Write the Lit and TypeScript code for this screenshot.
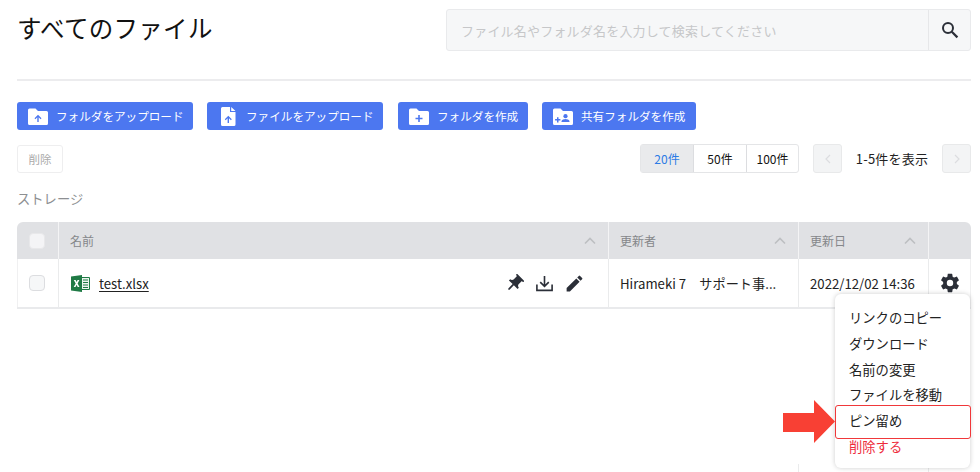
import { LitElement, html, css, svg } from "lit";
import { customElement } from "lit/decorators.js";

const folder = (inner: unknown) => html`<svg class="ic" width="20" height="17" viewBox="0 0 20 17"><path fill="#fff" d="M0 2a1.5 1.5 0 0 1 1.5-1.5h6L10 3h8.5A1.5 1.5 0 0 1 20 4.500v11a1.5 1.5 0 0 1-1.5 1.500h-17A1.5 1.5 0 0 1 0 15.500z"/>${inner}</svg>`;
const upArrow = svg`<path fill="#4c77f0" d="M10 6.800l3.500 3.500-.9.900-1.900-1.900V14H9.300V9.300l-1.900 1.900-.9-.9z"/>`;
const plus = svg`<path fill="#4c77f0" d="M9.200 7h1.600v2.700h2.700v1.600h-2.700V14H9.200v-2.700H6.500V9.700h2.700z"/>`;
const share = svg`<path fill="#4c77f0" d="M4 9.200h1.500v1.900h1.900v1.500H5.500v1.900H4v-1.900H2.100v-1.500H4z"/><circle fill="#4c77f0" cx="12.500" cy="8.200" r="2.100"/><path fill="#4c77f0" d="M8.500 14v-.8c0-1.400 2.700-2.100 4-2.100s4 .7 4 2.100v.8z"/>`;
const fileUp = html`<svg class="ic" width="15" height="19" viewBox="0 0 15 19"><path fill="#fff" d="M1.500 0H9v5h5.500v12.500A1.500 1.500 0 0 1 13 19H1.500A1.500 1.500 0 0 1 0 17.500v-16A1.500 1.500 0 0 1 1.500 0zM10.200 0l4.300 4h-4.300z"/><path fill="#4c77f0" d="M7.300 8.800l3.500 3.500-.9.900-1.900-1.900V16H6.600v-4.700l-1.900 1.900-.9-.9z"/></svg>`;
const chevUp = html`<svg class="sort" width="12" height="8" viewBox="0 0 12 8"><path fill="none" stroke="#bdbfc2" stroke-width="1.600" d="M1 6.500l5-5 5 5"/></svg>`;

@customElement("app-root")
export class AppRoot extends LitElement {
  static styles = css`
    :host { display: block; width: 980px; height: 472px; overflow: hidden; position: relative; background: #fff;
      font-family: "Noto Sans CJK JP", "Noto Sans", sans-serif; color: #222; box-sizing: border-box; padding: 0 9px 0 17px; }
    * { box-sizing: border-box; }
    .top { display: flex; justify-content: space-between; height: 79px; padding-top: 9px; }
    h1 { margin: 0; font-size: 24.500px; font-weight: 400; line-height: 37px; color: #111; letter-spacing: .3px; }
    .search { width: 525px; height: 42px; display: flex; background: #f6f7f8; border: 1px solid #e9eaec; border-radius: 3px; }
    .search .ph { flex: 1; padding-left: 14px; font-size: 13px; line-height: 42px; color: #c6c7c9; letter-spacing: .2px; }
    .search .btn { width: 42px; border-left: 1px solid #e6e7e9; display: flex; align-items: center; justify-content: center; }
    hr { margin: 0; border: 0; height: 2px; background: #ececee; }
    .actions { display: flex; margin-top: 21px; height: 28px; }
    .pri { height: 28px; background: #4c77f0; border-radius: 3px; color: #fff; font-size: 11.600px; display: flex; align-items: center; white-space: nowrap; }
    .a1 { width: 176px; padding-left: 11px; margin-right: 14px; }
    .a2 { width: 176px; padding-left: 14px; margin-right: 15px; }
    .a3 { width: 130px; padding-left: 11px; margin-right: 14px; }
    .a4 { width: 154px; padding-left: 11px; }
    .pri .ic { flex: none; margin-right: 8px; }
    .a2 .ic { margin-right: 10px; }
    .tools { display: flex; align-items: center; margin-top: 14px; height: 29px; }
    .del { width: 46px; height: 28px; border: 1px solid #eeeeef; border-radius: 3px; font-size: 11.500px; color: #aaa; display: flex; align-items: center; justify-content: center; }
    .seg { margin-left: auto; display: flex; width: 159px; height: 29px; border: 1px solid #e4e5e7; border-radius: 3px; font-size: 12px; color: #111; }
    .seg div { display: flex; align-items: center; justify-content: center; border-left: 1px solid #dcdde0; flex: none; }
    .seg div:first-child { width: 52px; border-left: 0; background: #e9eaec; color: #2c7be5; }
    .seg div:nth-child(2) { width: 53px; }
    .seg div:nth-child(3) { width: 52px; }
    .page { width: 29px; height: 29px; border: 1px solid #e8e9ea; border-radius: 3px; background: #f3f4f5; display: flex; align-items: center; justify-content: center; }
    .prev { margin-left: 14px; }
    .count { width: 100px; text-align: center; font-size: 13px; color: #222; letter-spacing: .2px; }
    .label { margin-top: 16px; height: 20px; font-size: 13.300px; line-height: 20px; color: #8d8f92; }
    .table { margin-top: 13px; width: 954px; border-bottom: 2px solid #e9eaec; }
    .row { display: grid; grid-template-columns: 41px 550px 190px 130px 43px; }
    .head { height: 37px; background: #e0e1e4; border-radius: 6px 6px 0 0; font-size: 12px; color: #85878a; }
    .body { height: 48px; box-shadow: inset 1px 0 0 #f0f0f1, inset -1px 0 0 #f0f0f1; font-size: 13.200px; color: #222; }
    .cell { display: flex; align-items: center; padding: 0 10px 0 11px; border-left: 1px solid #eaebec; white-space: nowrap; min-width: 0; }
    .head .cell { border-left-color: #f4f4f5; }
    .cell:first-child { border-left: 0; padding: 0 2px 0 0; justify-content: center; }
    .cell:last-child { padding: 0; justify-content: center; }
    .sort { margin-left: auto; margin-right: 2px; }
    .box { width: 16px; height: 16px; border: 1px solid #dcdde0; border-radius: 4px; background: #f6f7f8; }
    .head .box { background: #f4f4f6; border-color: #e8e8ea; }
    .xl { margin-left: 1px; flex: none; }
    .fname { margin-left: 9px; color: #222; font-size: 13.200px; text-decoration: underline; text-underline-offset: 2px; }
    .icons { margin-left: auto; display: flex; align-items: center; gap: 10px; margin-right: 13px; }
    .stub { position: absolute; top: 464px; width: 1px; height: 8px; background: #eaebec; }
    .menu { position: absolute; left: 835px; top: 294px; width: 135px; height: 174px; background: #fff; border-radius: 6px; box-shadow: 0 0 5px rgba(0,0,0,.2); padding-top: 11px; font-size: 13.300px; color: #222; }
    .menu div { height: 25.800px; line-height: 25.800px; padding-left: 14px; white-space: nowrap; }
    .menu .danger { color: #ee2b3b; }
    .highlight { position: absolute; left: 835px; top: 405px; width: 136px; height: 34px; border: 1.500px solid #f0383a; border-radius: 3px; }
    .arrow { position: absolute; left: 783px; top: 400px; }
  `;

  render() {
    return html`
      <div class="top">
        <h1>すべてのファイル</h1>
        <div class="search">
          <div class="ph">ファイル名やフォルダ名を入力して検索してください</div>
          <div class="btn"><svg width="18" height="18" viewBox="0 0 18 18"><circle cx="7" cy="7" r="5" fill="none" stroke="#2b2f38" stroke-width="2"/><path d="M10.800 10.800l5.600 5.600" stroke="#2b2f38" stroke-width="2.200" fill="none"/></svg></div>
        </div>
      </div>
      <hr />
      <div class="actions">
        <div class="pri a1">${folder(upArrow)}フォルダをアップロード</div>
        <div class="pri a2">${fileUp}ファイルをアップロード</div>
        <div class="pri a3">${folder(plus)}フォルダを作成</div>
        <div class="pri a4">${folder(share)}共有フォルダを作成</div>
      </div>
      <div class="tools">
        <div class="del">削除</div>
        <div class="seg"><div>20件</div><div>50件</div><div>100件</div></div>
        <div class="page prev"><svg width="6" height="10" viewBox="0 0 6 10"><path d="M5 1L1 5l4 4" fill="none" stroke="#dcdde0" stroke-width="1.200"/></svg></div>
        <div class="count">1-5件を表示</div>
        <div class="page"><svg width="6" height="10" viewBox="0 0 6 10"><path d="M1 1l4 4-4 4" fill="none" stroke="#dcdde0" stroke-width="1.200"/></svg></div>
      </div>
      <div class="label">ストレージ</div>
      <div class="table">
        <div class="row head">
          <div class="cell"><div class="box"></div></div>
          <div class="cell">名前${chevUp}</div>
          <div class="cell">更新者${chevUp}</div>
          <div class="cell">更新日${chevUp}</div>
          <div class="cell"></div>
        </div>
        <div class="row body">
          <div class="cell"><div class="box"></div></div>
          <div class="cell">
            <svg class="xl" width="19" height="17" viewBox="0 0 19 17"><path fill="#eef5f0" stroke="#1f7a45" stroke-width="1" d="M9 2.500h9.500v12H9z"/><path stroke="#1f7a45" stroke-width="1" d="M12 5h5M12 7.500h5M12 10h5M12 12.500h5"/><path fill="#1f7a45" d="M0 1.500L11 0v17L0 15.500z"/><path fill="#fff" d="M2.800 5h1.800l1 2 1-2h1.800L6.600 8.500 8.500 12H6.700l-1.100-2.200L4.500 12H2.700l2-3.500z"/></svg>
            <span class="fname">test.xlsx</span>
            <div class="icons">
              <svg width="21" height="21" viewBox="0 0 24 24"><path fill="#2b2f38" transform="rotate(45 12 12)" d="M16 9V4h1c.55 0 1-.45 1-1s-.45-1-1-1H7c-.55 0-1 .45-1 1s.45 1 1 1h1v5c0 1.660-1.340 3-3 3v2h5.970v7l1 1 1-1v-7H19v-2c-1.660 0-3-1.340-3-3z"/></svg>
              <svg width="19" height="19" viewBox="0 0 20 20"><path fill="none" stroke="#2b2f38" stroke-width="1.700" d="M2 11v6.200h16V11M10 2v10.500M5.500 8.500l4.500 4.500 4.500-4.500"/></svg>
              <svg width="21" height="21" viewBox="0 0 24 24"><path fill="#2b2f38" d="M3 17.250V21h3.750L17.810 9.940l-3.750-3.750L3 17.250zM20.710 7.040a1 1 0 0 0 0-1.410l-2.340-2.340a1 1 0 0 0-1.410 0l-1.830 1.830 3.750 3.750 1.830-1.830z"/></svg>
            </div>
          </div>
          <div class="cell">Hirameki 7　サポート事...</div>
          <div class="cell">2022/12/02 14:36</div>
          <div class="cell"><svg width="22" height="22" viewBox="0 0 24 24"><path fill="#2b2f38" d="M19.430 12.980c.04-.32.070-.64.070-.98s-.03-.66-.07-.98l2.110-1.650c.19-.15.240-.42.120-.64l-2-3.460c-.12-.22-.39-.3-.61-.22l-2.490 1c-.52-.4-1.080-.73-1.690-.98l-.38-2.650A.488.488 0 0 0 14 2h-4c-.25 0-.46.18-.49.42l-.38 2.650c-.61.25-1.170.59-1.690.98l-2.490-1c-.23-.09-.49 0-.61.220l-2 3.460c-.13.220-.07.490.12.640l2.110 1.650c-.04.320-.07.650-.07.980s.03.660.07.980l-2.110 1.650c-.19.150-.24.420-.12.640l2 3.460c.12.220.39.300.61.220l2.490-1c.52.400 1.080.730 1.690.980l.38 2.650c.03.240.24.420.49.420h4c.25 0 .46-.18.490-.42l.38-2.650c.61-.25 1.170-.59 1.690-.98l2.490 1c.23.090.49 0 .61-.22l2-3.460c.12-.22.070-.49-.12-.64l-2.110-1.650zM12 15.500a3.500 3.500 0 1 1 0-7 3.500 3.500 0 0 1 0 7z"/></svg></div>
        </div>
      </div>
      <div class="stub" style="left: 798px"></div>
      <div class="stub" style="left: 928px"></div>
      <div class="menu">
        <div>リンクのコピー</div>
        <div>ダウンロード</div>
        <div>名前の変更</div>
        <div>ファイルを移動</div>
        <div>ピン留め</div>
        <div class="danger">削除する</div>
      </div>
      <div class="highlight"></div>
      <svg class="arrow" width="52" height="43" viewBox="0 0 52 43"><path fill="#f84034" d="M0 13h31V0l21 21.500L31 43V32H0z"/></svg>
    `;
  }
}
